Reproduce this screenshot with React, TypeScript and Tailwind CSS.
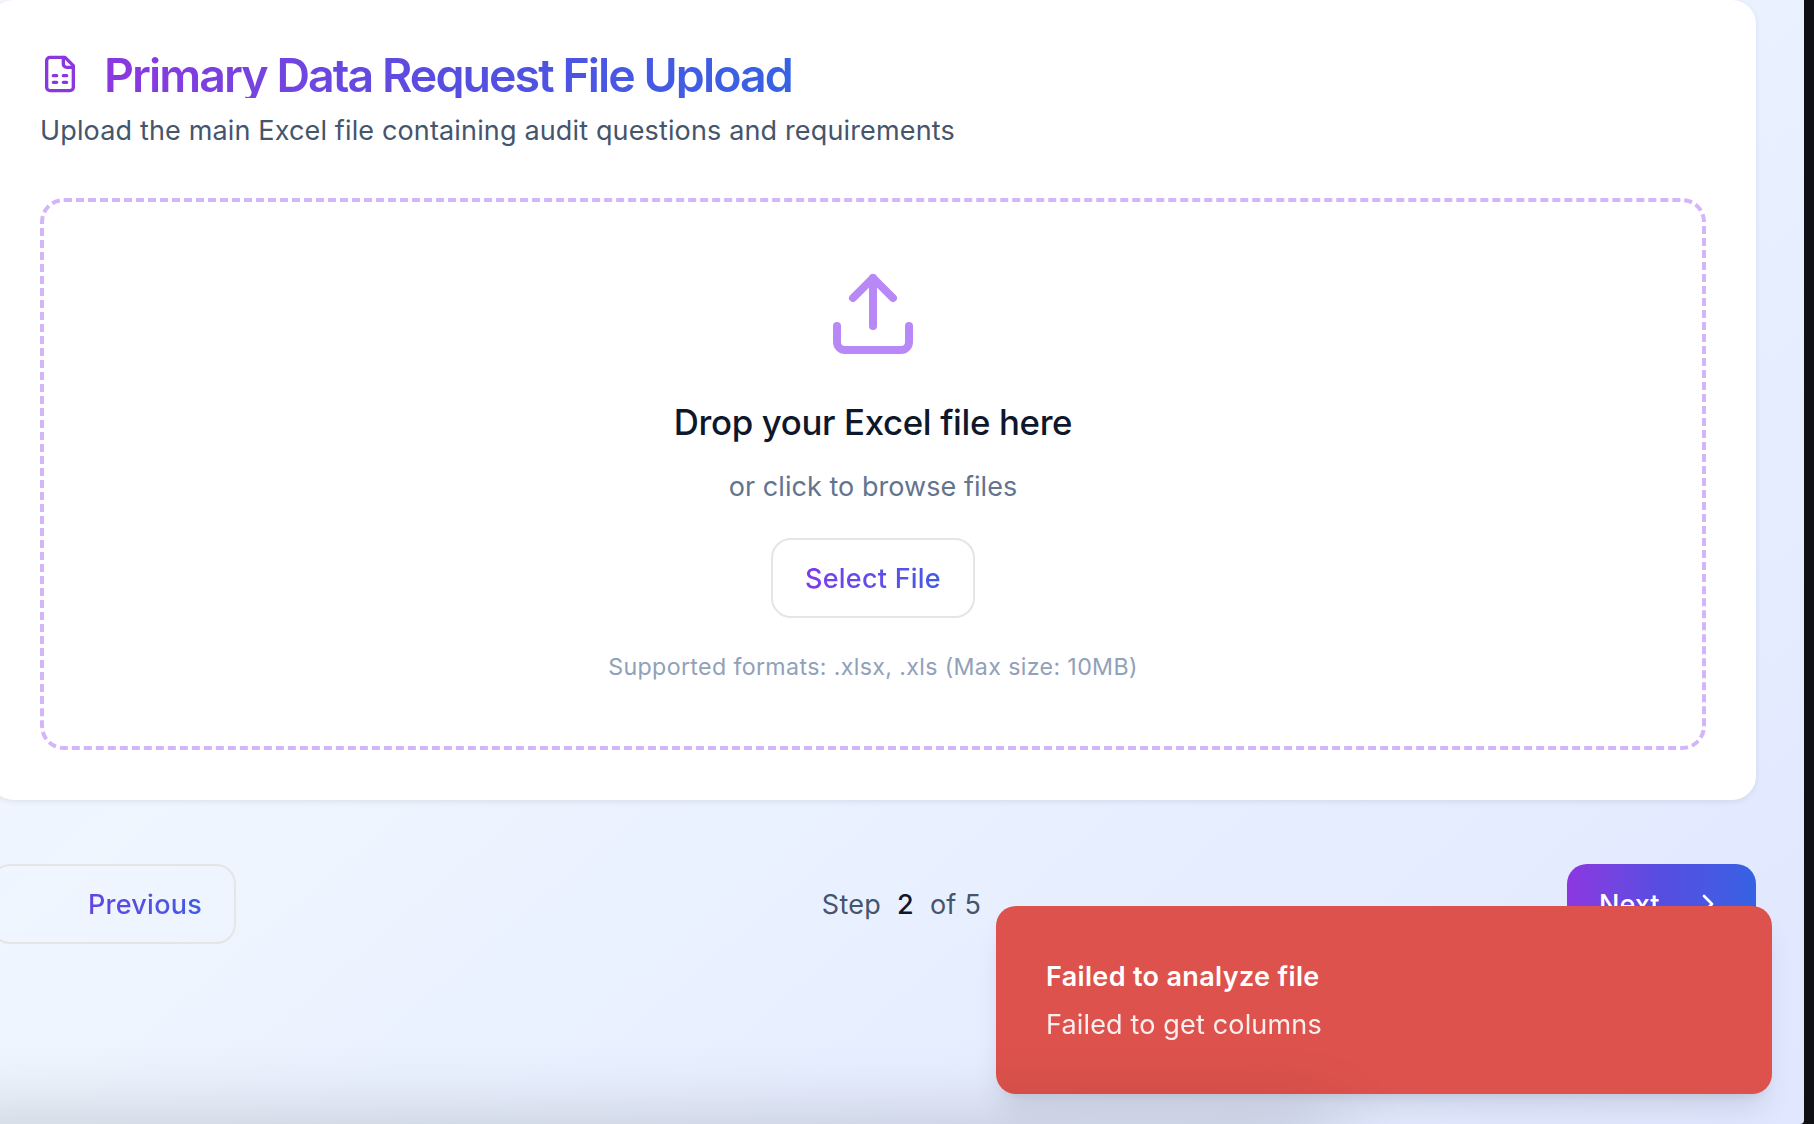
import { ChevronRight, Upload } from "lucide-react";

function SheetIcon() {
  return (
    <svg className="size-10 shrink-0 text-[#8b37df]" viewBox="0 0 24 24" fill="none" stroke="currentColor" strokeWidth="2" strokeLinecap="round" strokeLinejoin="round">
      <path d="M15 2H6a2 2 0 0 0-2 2v16a2 2 0 0 0 2 2h12a2 2 0 0 0 2-2V7Z" />
      <path d="M14 2v4a2 2 0 0 0 2 2h4" />
      <path d="M8 13h2M14 13h2M8 17h2M14 17h2" />
    </svg>
  );
}

function UploadCard() {
  return (
    <section className="h-[800px] rounded-[24px] bg-white px-[50px] pt-[50px] shadow-[0_2px_6px_rgba(0,0,0,0.08)]">
      <div className="flex h-12 items-center gap-6">
        <SheetIcon />
        <h1 className="h-12 bg-linear-to-r from-[#8b37df] via-[#564de1] to-[#3562e3] bg-clip-text text-[46.5px] leading-[50px] font-semibold tracking-[-1.94px] whitespace-nowrap text-transparent">
          Primary Data Request File Upload
        </h1>
      </div>
      <p className="mt-[13px] leading-10 tracking-[0.146px] text-slate-600">
        Upload the main Excel file containing audit questions and requirements
      </p>
      <div className="mt-[47px] flex h-[552px] flex-col items-center rounded-[24px] border-4 border-dashed border-[#d4b5f9] pt-16">
        <Upload className="size-24 text-[#b888f7]" />
        <h3 className="mt-8 text-[34.8px] leading-[56px] font-medium tracking-[-0.35px] text-slate-900">
          Drop your Excel file here
        </h3>
        <p className="mt-[17px] leading-10 tracking-[0.05px] text-slate-500">or click to browse files</p>
        <button className="mt-[31px] flex h-20 w-[204px] items-center justify-center rounded-[20px] border-2 border-neutral-200 pt-0.5 font-medium">
          <span className="bg-linear-to-r from-[#7c3aed] to-[#3f5be3] bg-clip-text leading-10 tracking-[0.24px] whitespace-nowrap text-transparent">
            Select File
          </span>
        </button>
        <p className="mt-[33px] text-[23.2px] leading-8 tracking-[0.36px] text-slate-400">
          Supported formats: .xlsx, .xls (Max size: 10MB)
        </p>
      </div>
    </section>
  );
}

function StepFooter() {
  return (
    <footer className="flex h-20 items-center justify-between leading-10">
      <button className="flex h-20 w-[246px] items-center justify-end rounded-[20px] border-2 border-[#e5e5e5] pt-0.5 pr-8 font-medium">
        <span className="bg-linear-to-r from-[#6443e2] to-[#3f5be3] bg-clip-text tracking-[0.25px] text-transparent">
          Previous
        </span>
      </button>
      <div className="flex gap-4 pt-0.5 tracking-[0.25px] text-slate-600">
        <span>Step</span>
        <span className="font-medium text-slate-900">2</span>
        <span>of 5</span>
      </div>
      <button className="flex h-20 w-[189px] items-center justify-between rounded-[20px] bg-linear-to-r from-[#8b37df] via-[#564de1] to-[#3562e3] px-8 font-medium text-white">
        <span className="pt-0.5">Next</span>
        <ChevronRight className="size-8" />
      </button>
    </footer>
  );
}

function Toast() {
  return (
    <div className="absolute top-[906px] left-[996px] h-[188px] w-[776px] rounded-[20px] bg-[#dd524c] px-[50px] pt-[51px] text-white shadow-[0_20px_30px_-6px_rgba(0,0,0,0.1),0_8px_12px_-8px_rgba(0,0,0,0.1)]">
      <p className="leading-10 font-semibold tracking-[0.34px]">Failed to analyze file</p>
      <p className="mt-2 leading-10 tracking-[0.16px] opacity-90">Failed to get columns</p>
    </div>
  );
}

export default function App() {
  return (
    <div className="relative h-[1124px] w-[1814px] overflow-hidden bg-[#0e1014] font-[Inter,sans-serif] text-[27px]">
      <div className="h-full w-[1804px] rounded-br-[4px] bg-linear-to-br from-purple-50 via-blue-50 to-indigo-100 bg-[length:2004px_1724px] bg-right-bottom">
        <main className="-ml-[10px] mr-12 flex flex-col gap-16">
          <UploadCard />
          <StepFooter />
        </main>
      </div>
      <Toast />
      <div className="absolute -bottom-20 -left-24 h-20 w-[1430px] shadow-[0_0_80px_rgba(0,0,0,0.19)]" />
    </div>
  );
}
